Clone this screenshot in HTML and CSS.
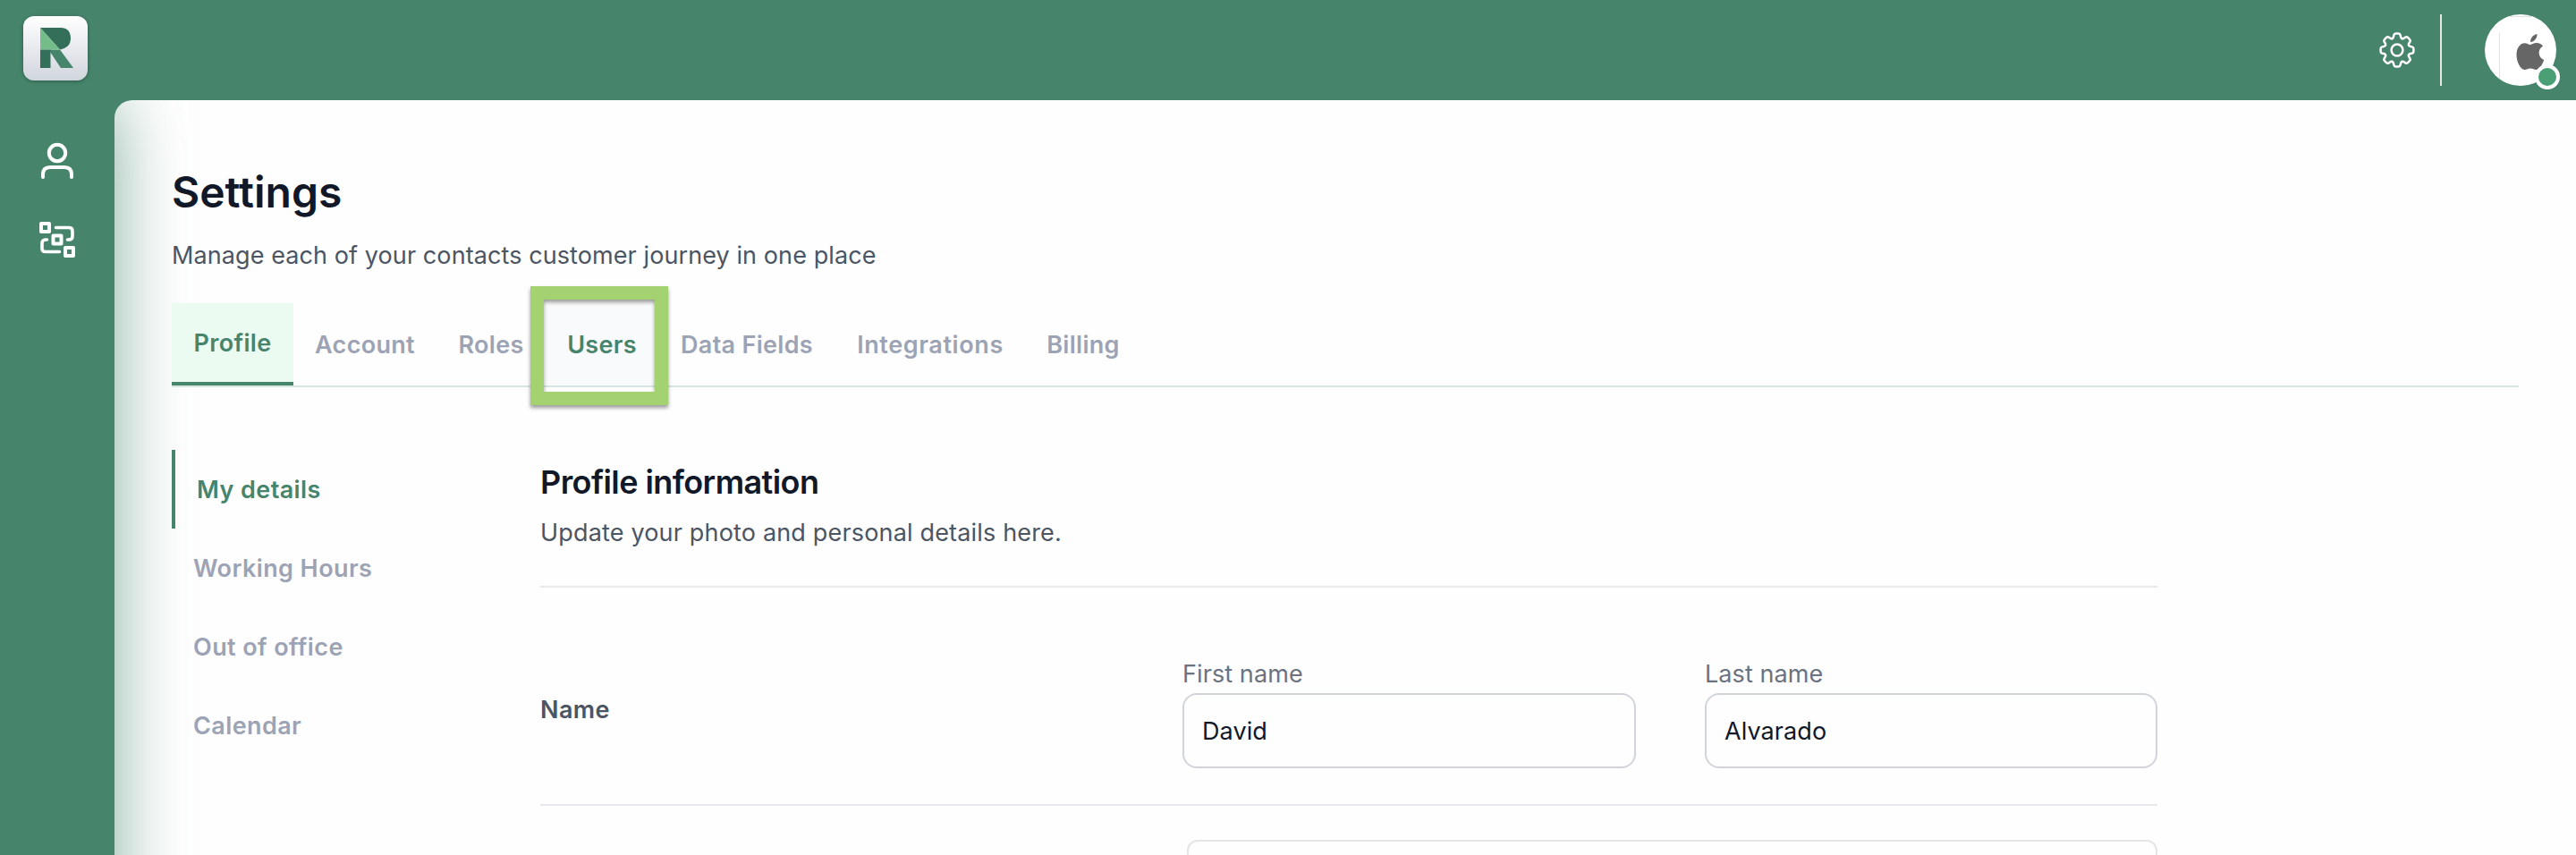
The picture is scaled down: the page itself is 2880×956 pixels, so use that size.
FILE: index.html
```html
<!DOCTYPE html>
<html lang="en">
<head>
<meta charset="utf-8">
<title>Settings</title>
<link rel="stylesheet" href="styles.css">
</head>
<body>
<div class="app">
  <header class="topbar">
    <a class="logo" aria-label="Home">
      <svg width="72" height="72" viewBox="0 0 72 72">
        <path fill="#46856c" d="M30 37.500H41L56 58H42L30 40Z"/>
        <path fill="#347059" d="M19 13H42C50 13 53 18.500 53 25S49 36 41 37.500Z"/>
        <path fill="#74bd8b" d="M19 13L41 37.500H19Z"/>
        <path fill="#347059" d="M19 37.500H30.500V58H19Z"/>
      </svg>
    </a>
    <div class="actions">
      <svg class="gear" width="44" height="44" viewBox="-22 -22 44 44">
        <defs><path id="tooth" d="M-5.400 -13C-3.600 -13.700 -4 -15.500 -3.600 -16.800Q-3.200 -18.400 -1.500 -18.400H1.500Q3.200 -18.400 3.600 -16.800C4 -15.500 3.600 -13.700 5.400 -13"/></defs>
        <circle r="6.400"/>
        <use href="#tooth"/><use href="#tooth" transform="rotate(45)"/><use href="#tooth" transform="rotate(90)"/><use href="#tooth" transform="rotate(135)"/><use href="#tooth" transform="rotate(180)"/><use href="#tooth" transform="rotate(225)"/><use href="#tooth" transform="rotate(270)"/><use href="#tooth" transform="rotate(315)"/>
      </svg>
      <span class="rule"></span>
      <div class="avatar">
        <svg width="80" height="80" viewBox="0 0 80 80">
          <path d="M26 2.500H54M16.500 20V72" stroke="#e3e3e5" fill="none"/>
          <path fill="#666" d="M51 31c0-4.500 3-8 7.500-9 .4 4.500-3 8.800-7.500 9ZM50.500 34c1.500 0 4-2 7.500-2 3 0 5.500 1.300 7 3.500-6.500 4-5.500 13 1.200 15.500C64.500 56 61 62 57.500 62c-2.500 0-3.500-1.500-6.500-1.500S47 62 44.500 62C40 62 35.500 53 35.500 45.500c0-8.500 4.500-13.200 9-13.200 2.800 0 4.500 1.700 6 1.700Z"/>
        </svg>
        <span class="status"></span>
      </div>
    </div>
  </header>
  <nav class="rail">
    <svg width="48" height="48" viewBox="0 0 48 48"><circle cx="24" cy="15" r="9.200"/><path d="M8 42V39Q8 31 16 31H32Q40 31 40 39V42"/></svg>
    <svg width="48" height="48" viewBox="0 0 48 48"><path d="M6 6h9v9H6zM19.500 19.500h9v9h-9zM33 33h9v9h-9z"/><path class="thin" d="M22.500 10.500H37Q41 10.500 41 14.500V20Q41 24 37 24H35.500M12.500 24H11Q7 24 7 28V34Q7 37.500 11 37.500H26.500"/></svg>
  </nav>
  <main class="panel">
    <h1>Settings</h1>
    <p class="lead">Manage each of your contacts customer journey in one place</p>
    <div class="tabs">
      <a class="tab active">Profile</a>
      <a class="tab account">Account</a>
      <a class="tab roles">Roles</a>
      <a class="tab users">Users<span class="marker"></span></a>
      <a class="tab fields">Data Fields</a>
      <a class="tab integrations">Integrations</a>
      <a class="tab billing">Billing</a>
    </div>
    <div class="content">
      <nav class="sections">
        <a class="current">My details</a>
        <a>Working Hours</a>
        <a>Out of office</a>
        <a>Calendar</a>
      </nav>
      <section class="profile">
        <div class="intro">
          <h2>Profile information</h2>
          <p>Update your photo and personal details here.</p>
        </div>
        <div class="row">
          <span class="row-title">Name</span>
          <label>First name<span class="field">David</span></label>
          <label>Last name<span class="field">Alvarado</span></label>
        </div>
        <div class="next"></div>
      </section>
    </div>
  </main>
</div>
</body>
</html>
```
FILE: styles.css
```css
* { box-sizing: border-box; }
body { margin: 0; overflow: hidden; background: #46856c; font-family: Inter, "Liberation Sans", sans-serif; font-size: 27px; line-height: 40px; letter-spacing: .09px; color: #4b5563; }
h1, h2, p { margin: 0; }
.app { height: 956px; display: grid; grid-template: 112px 1fr / 128px 1fr; }
.topbar { grid-column: 1 / 3; display: flex; align-items: flex-start; justify-content: space-between; padding: 0 22px 0 26px; }
.logo { margin-top: 18px; height: 72px; width: 72px; border-radius: 12px; background: linear-gradient(#fff, #d1d5dd); box-shadow: 0 1px 4px #0005; }
.logo svg { display: block; }
.actions { display: flex; padding-top: 16px; }
.gear { margin: 18px 26px 0 0; fill: none; stroke: #fff; stroke-width: 2.500; stroke-linecap: round; }
.rule { width: 2px; height: 80px; background: #e5e7e5; margin-right: 48px; }
.avatar { position: relative; width: 80px; height: 80px; border-radius: 50%; background: #fff; }
.avatar svg { display: block; }
.status { position: absolute; right: -4px; bottom: -4px; width: 28px; height: 28px; border: 4px solid #fff; border-radius: 50%; background: #4a9f75; }
.rail { display: flex; flex-direction: column; align-items: center; gap: 40px; padding-top: 44px; }
.rail svg { fill: none; stroke: #fff; stroke-width: 4; stroke-linecap: round; stroke-linejoin: round; }
.rail .thin { stroke-width: 3.600; }
.panel { position: relative; overflow: hidden; background: #fefefe; border-top-left-radius: 20px; padding: 73px 64px 0; }
.panel::before { content: ""; position: absolute; left: -128px; top: 0; width: 128px; height: 1000px; box-shadow: 0 0 80px #46856caa; }
.panel > * { position: relative; }
h1 { font-size: 48px; line-height: 60px; font-weight: 600; letter-spacing: 0; color: #111827; }
.lead { margin-top: 21px; }
.tabs { margin-top: 33px; display: flex; height: 94px; border-bottom: 2px solid #d7e5df; font-weight: 600; letter-spacing: .3px; color: #9ca3b4; line-height: 91px; }
.tab { text-align: center; white-space: nowrap; height: 92px; padding-top: 1px; }
.active { width: 136px; padding-top: 0; line-height: 89px; color: #46856c; background: #ecfbf2; border-bottom: 4px solid #46856c; }
.account { width: 160px; }
.roles { width: 122px; }
.users { position: relative; width: 126px; color: #46856c; background: #f9fafc; }
.fields { width: 198px; }
.integrations { width: 212px; letter-spacing: .6px; }
.billing { width: 130px; }
.marker { position: absolute; left: -17px; top: -19px; width: 154px; height: 133px; border: 15px solid #a4d270; filter: drop-shadow(0 3px 2px #0006); }
.content { display: flex; margin-top: 70px; }
.sections { width: 412px; display: flex; flex-direction: column; font-weight: 600; letter-spacing: .4px; color: #9ca3b4; }
.sections a { height: 88px; line-height: 90px; padding-left: 24px; }
.sections .current { border-left: 4px solid #46856c; color: #46856c; }
.profile { width: 1808px; }
.intro { height: 154px; padding-top: 16px; border-bottom: 2px solid #e8e9ee; }
h2 { font-size: 36px; line-height: 40px; font-weight: 600; letter-spacing: -.58px; color: #111827; }
.intro p { margin-top: 17px; letter-spacing: .17px; }
.row { height: 244px; padding-top: 77px; display: grid; grid-template-columns: 641px 507px 506px; column-gap: 77px; border-bottom: 2px solid #e8e9ee; color: #6b7280; }
.row-title { padding-top: 40px; color: #4b5563; font-weight: 600; letter-spacing: .4px; }
.field { display: block; height: 84px; border: 2px solid #d1d5db; border-radius: 16px; padding: 0 20px; line-height: 82px; color: #111827; margin-top: 1px; }
.next { margin: 38px 0 0 723px; height: 84px; border: 2px solid #e5e5e7; border-radius: 12px; }
```
